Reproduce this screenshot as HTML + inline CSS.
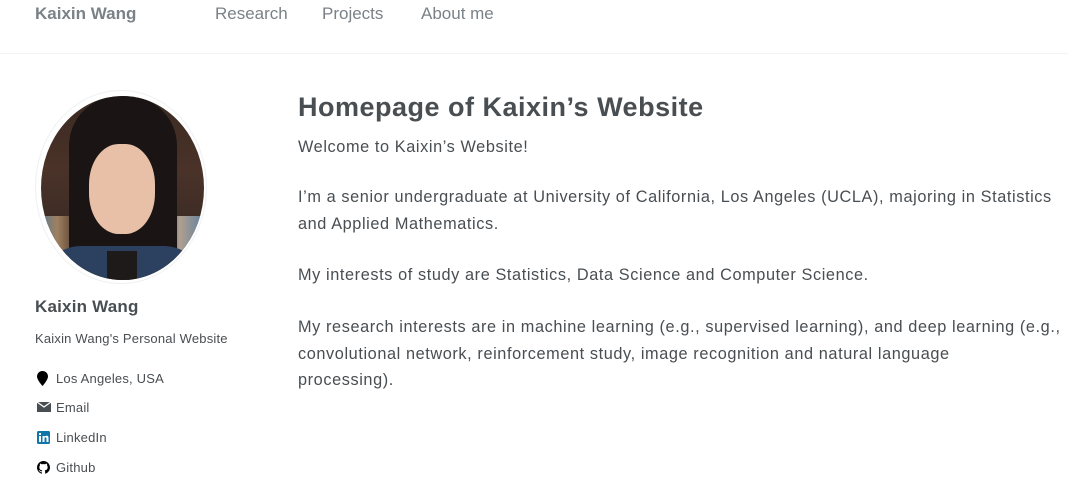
<!DOCTYPE html>
<html><head><meta charset="utf-8"><style>
body{margin:0;width:1068px;height:494px;overflow:hidden;background:#fff;font-family:"Liberation Sans",sans-serif;color:#494e52;position:relative}
.nav{position:absolute;top:0;left:0;width:1068px;height:53px;border-bottom:1px solid #f2f3f3}
.nav span{position:absolute;top:4px;font-size:17px;color:#7a8288}
.nav .brand{left:35px;font-weight:bold;color:#7a8288;font-size:17px}
.av{position:absolute;left:35px;top:90px;width:172px;height:194px;border-radius:50%;background:#fff;border:1px solid #eef0f1;box-sizing:border-box}
.img{position:absolute;left:41px;top:96px;width:163px;height:184px;border-radius:50%;overflow:hidden;background:linear-gradient(#3a2a22,#4a3228 40%,#2e2622)}
.p{position:absolute;font-size:13px;white-space:nowrap;letter-spacing:.2px}
.main{position:absolute;left:298px;font-size:16.3px;line-height:26.5px;white-space:nowrap;letter-spacing:.6px}
.ic{position:absolute;left:37px}
</style></head><body>
<div class="nav"><span class="brand">Kaixin Wang</span><span style="left:215px">Research</span><span style="left:322px">Projects</span><span style="left:421px">About me</span></div>
<div class="av"></div>
<div class="img">
<div style="position:absolute;left:0;top:120px;width:163px;height:40px;background:linear-gradient(90deg,#5a7a90,#a08060 10%,#3a2a22 25%,#3a2a22 75%,#b0a090 85%,#6080a0)"></div>
<div style="position:absolute;left:28px;top:0;width:108px;height:184px;border-radius:50px 50px 10px 10px;background:#1a1514"></div>
<div style="position:absolute;left:48px;top:48px;width:66px;height:90px;border-radius:45%;background:#e8c0a8"></div>
<div style="position:absolute;left:0;top:150px;width:163px;height:40px;background:#2c4060;border-radius:40px 40px 0 0"></div>
<div style="position:absolute;left:66px;top:155px;width:30px;height:30px;background:#1e1a1a"></div>
</div>
<div class="p" style="left:35px;top:297px;font-size:17px;font-weight:bold">Kaixin Wang</div>
<div class="p" style="left:35px;top:331px">Kaixin Wang's Personal Website</div>
<svg class="ic" style="top:371px" width="11" height="15" viewBox="0 0 11 15"><path d="M5.5 0C2.5 0 0 2.4 0 5.5C0 9 5.5 15 5.5 15S11 9 11 5.5C11 2.4 8.5 0 5.5 0Z" fill="#000"/></svg>
<div class="p" style="left:56px;top:371px">Los Angeles, USA</div>
<svg class="ic" style="top:402px" width="14" height="10" viewBox="0 0 14 10"><rect width="14" height="10" fill="#494e52"/><path d="M0 0L7 5L14 0" stroke="#fff" stroke-width="1.3" fill="none"/></svg>
<div class="p" style="left:56px;top:400px">Email</div>
<svg class="ic" style="top:431px" width="13" height="13" viewBox="0 0 13 13"><rect width="13" height="13" rx="1.5" fill="#0e76a8"/><rect x="2" y="5" width="2" height="6" fill="#fff"/><rect x="2" y="2" width="2" height="2" fill="#fff"/><path d="M5.5 5h2v1c.5-.8 1.3-1.2 2.2-1.2 1.5 0 1.8 1 1.8 2.3V11h-2V7.5c0-.7-.2-1.1-.8-1.1s-1.2.4-1.2 1.2V11h-2Z" fill="#fff"/></svg>
<div class="p" style="left:56px;top:430px">LinkedIn</div>
<svg class="ic" style="top:461px" width="13" height="13" viewBox="0 0 16 16"><path fill="#000" d="M8 0C3.6 0 0 3.6 0 8c0 3.5 2.3 6.5 5.5 7.6.4.1.5-.2.5-.4v-1.4c-2.2.5-2.7-1-2.7-1-.4-.9-.9-1.2-.9-1.2-.7-.5.1-.5.1-.5.8.1 1.2.8 1.2.8.7 1.3 1.9.9 2.300.7.1-.5.3-.9.5-1.1-1.8-.2-3.6-.9-3.6-4 0-.9.3-1.6.8-2.1-.1-.2-.4-1 .1-2.1 0 0 .7-.2 2.2.8.6-.2 1.3-.3 2-.3s1.4.1 2 .3c1.5-1 2.2-.8 2.2-.8.4 1.1.2 1.9.1 2.1.5.6.8 1.3.8 2.1 0 3.1-1.9 3.7-3.6 3.9.3.3.5.8.5 1.5v2.2c0 .2.1.5.6.4C13.700 14.5 16 11.5 16 8c0-4.4-3.6-8-8-8z"/></svg>
<div class="p" style="left:56px;top:460px">Github</div>
<div class="main" style="top:90px;font-size:27px;font-weight:bold;line-height:34px;letter-spacing:.5px">Homepage of Kaixin’s Website</div>
<div class="main" style="top:134px">Welcome to Kaixin’s Website!</div>
<div class="main" style="top:184px">I’m a senior undergraduate at University of California, Los Angeles (UCLA), majoring in Statistics<br>and Applied Mathematics.</div>
<div class="main" style="top:262px">My interests of study are Statistics, Data Science and Computer Science.</div>
<div class="main" style="top:314px">My research interests are in machine learning (e.g., supervised learning), and deep learning (e.g.,<br>convolutional network, reinforcement study, image recognition and natural language<br>processing).</div>
</body></html>
